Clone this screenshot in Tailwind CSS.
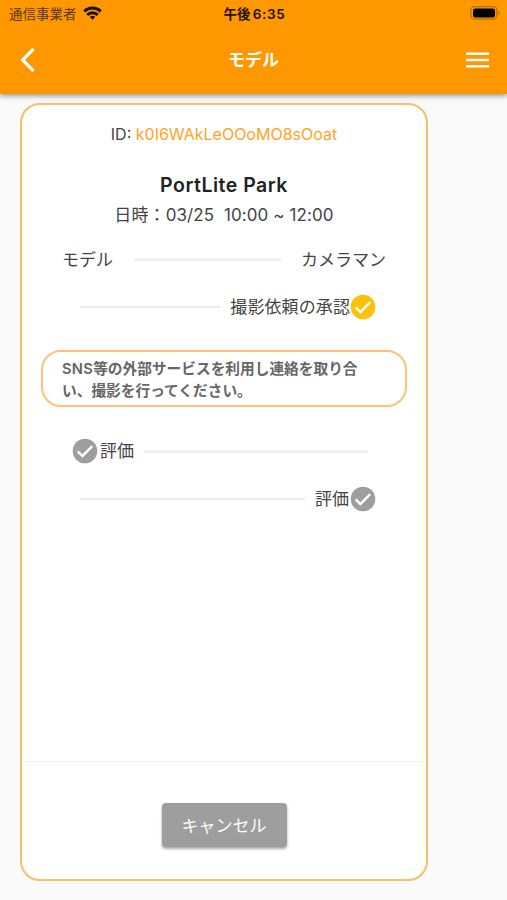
<!DOCTYPE html>
<html lang="ja">
<head>
<meta charset="utf-8">
<title>モデル</title>
<script src="https://cdn.jsdelivr.net/npm/@tailwindcss/browser@4"></script>
</head>
<body class="w-[507px] h-[900px] overflow-hidden bg-[#fafafa] font-[Inter,'Noto_Sans_CJK_JP',sans-serif] text-[#444] flex flex-col">
<header class="relative h-[94px] shrink-0 bg-[#ff9800] shadow-[0_2px_5px_rgba(0,0,0,0.4)]">
  <div class="h-7 grid grid-cols-3 items-center pl-[9px] pr-[7px] text-[#2b1a00]">
    <div class="flex items-center gap-[6px] whitespace-nowrap"><span class="text-[13.5px] leading-7 text-[#5a3700]">通信事業者</span>
      <svg class="w-[19px] h-[14px] -mt-[2px]" viewBox="0 0 19 14" fill="none" stroke="#1c1000" stroke-width="3"><path d="M1.2 5.4a12 12 0 0 1 16.6 0M4.2 8.9a7.6 7.6 0 0 1 10.6 0" /><path d="M9.5 13.8 6.8 11.1a3.9 3.9 0 0 1 5.4 0Z" fill="#1c1000" stroke="none"/></svg>
    </div>
    <div class="text-center text-[13.5px] leading-7 font-semibold tracking-[0.1px] text-[#1c1000] whitespace-nowrap"><span class="font-bold">午後</span><span class="ml-[2px] tracking-[0.7px]">6:35</span></div>
    <svg class="w-[30px] h-[14px] justify-self-end -mt-[2px]" viewBox="0 0 30 14"><rect x=".8" y=".6" width="26" height="12.6" rx="3.6" fill="none" stroke="#b56c00" stroke-width="1.2"/><rect x="3" y="2.5" width="22" height="9" rx="2" fill="#000"/><path d="M28 5v4q1.6-.5 1.6-2T28 5" fill="#b56c00"/></svg>
  </div>
  <div class="h-[64px] flex items-center justify-between pl-[20px] pr-[18px]">
    <svg class="w-[23px] h-[26px]" viewBox="0 0 23 26" fill="none" stroke="#fff" stroke-width="3.2"><path d="M13.5 2 2.6 13l10.9 11"/></svg>
    <h1 class="text-[17px] leading-6 font-bold text-white -ml-[2px]">モデル</h1>
    <svg class="w-[23px] h-[16px]" viewBox="0 0 23 16" fill="#fff"><path d="M0 .4h23V3H0zM0 6.7h23v2.6H0zM0 13h23v2.6H0z"/></svg>
  </div>
</header>
<main class="mt-[9px] ml-5 w-[408px] h-[778px] shrink-0 bg-white border-2 border-[#fbbd66] rounded-[20px] flex flex-col">
  <p class="mt-[17px] text-center text-[16px] leading-6 whitespace-nowrap">ID: <span class="text-[#ffa426]">k0I6WAkLeOOoMO8sOoat</span></p>
  <h2 class="mt-[25px] text-center text-[19.5px] leading-7 font-semibold tracking-[0.5px] text-[#222]">PortLite Park</h2>
  <p class="mt-[2px] text-center text-[17px] leading-7 tracking-[0.1px] whitespace-pre">日時：03/25  10:00 ~ 12:00</p>
  <div class="mt-[16px] h-7 flex items-center pl-[40px] pr-[40px] text-[17px]">
    <span class="pt-[3px]">モデル</span><i class="h-[3px] flex-1 ml-[21px] mr-[20px] bg-[#f0f0f0]"></i><span class="pt-[3px]">カメラマン</span>
  </div>
  <div class="mt-[20px] h-7 flex items-center pl-[58px] pr-[50px] text-[17px]">
    <i class="h-[2px] flex-1 mr-[10px] bg-[#ebebeb]"></i><span class="pt-[2px] tracking-[0.1px]">撮影依頼の承認</span>
    <svg class="w-[26px] h-[26px]" viewBox="0 0 26 26"><circle cx="13" cy="13" r="12.3" fill="#ffc107"/><path d="m5.7 13.3 4.7 4.7 9.8-9.8" fill="none" stroke="#fff" stroke-width="2.4"/></svg>
  </div>
  <p class="mt-[29px] ml-[19px] w-[366px] h-[57px] border-2 border-[#fcc17c] rounded-[20px] pl-[19px] pt-[6px] text-[14.7px] leading-[22px] font-bold text-[#666] whitespace-nowrap"><span class="font-semibold tracking-[0.3px]">SNS</span>等の外部サービスを利用し連絡を取り合<br>い、撮影を行ってください。</p>
  <div class="mt-[30px] h-7 flex items-center pl-[50px] pr-[58px] text-[17px]">
    <svg class="w-[26px] h-[26px] mr-[2px]" viewBox="0 0 26 26"><circle cx="13" cy="13" r="12.3" fill="#9e9e9e"/><path d="m5.7 13.3 4.7 4.7 9.8-9.8" fill="none" stroke="#fff" stroke-width="2.4"/></svg>
    <span class="pt-[2px]">評価</span><i class="h-[3px] flex-1 ml-[10px] bg-[#f0f0f0]"></i>
  </div>
  <div class="mt-[20px] h-7 flex items-center pl-[58px] pr-[50px] text-[17px]">
    <i class="h-[2px] flex-1 mr-[10px] bg-[#ebebeb]"></i><span class="pt-[2px]">評価</span>
    <svg class="w-[26px] h-[26px] ml-px" viewBox="0 0 26 26"><circle cx="13" cy="13" r="12.3" fill="#9e9e9e"/><path d="m5.7 13.3 4.7 4.7 9.8-9.8" fill="none" stroke="#fff" stroke-width="2.4"/></svg>
  </div>
  <div class="mt-auto h-[118px] border-t border-[#f3f3f3] flex justify-center pt-[41px]">
    <button class="w-[125px] h-[44px] rounded-[4px] bg-[#9e9e9e] text-white text-[17px] leading-[46px] shadow-[0_2px_3px_rgba(0,0,0,0.35)]">キャンセル</button>
  </div>
</main>
</body>
</html>
